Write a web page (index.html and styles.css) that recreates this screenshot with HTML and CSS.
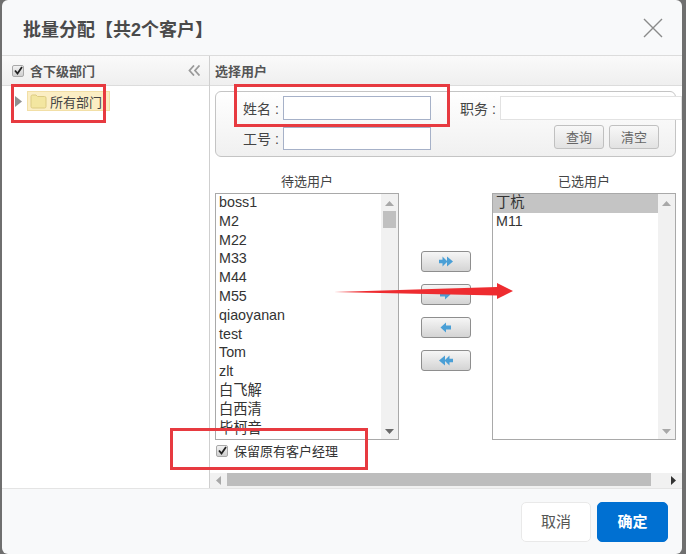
FILE: index.html
```html
<!DOCTYPE html>
<html lang="zh">
<head>
<meta charset="utf-8">
<title>批量分配</title>
<link rel="stylesheet" href="styles.css">
</head>
<body>
<div class="dialog">
  <header class="dlg-head">
    <h1 class="dlg-title">批量分配【共2个客户】</h1>
    <svg class="close" width="22" height="22" viewBox="0 0 22 22"><path d="M2 2 L20 20 M20 2 L2 20" stroke="#8a8a8a" stroke-width="1.4" fill="none"/></svg>
  </header>
  <div class="dlg-body">
    <aside class="left">
      <div class="bar left-bar">
        <span class="check"><svg width="9" height="9" viewBox="0 0 9 9"><path d="M1 4.5 L3.5 7.5 L8 1" stroke="#222" stroke-width="1.8" fill="none"/></svg></span>
        <span class="bar-text">含下级部门</span>
        <svg class="collapse" width="13" height="11" viewBox="0 0 13 11"><path d="M6 0.5 L1.5 5.5 L6 10.5 M11.5 0.5 L7 5.5 L11.5 10.5" stroke="#9a9a9a" stroke-width="1.8" fill="none"/></svg>
      </div>
      <div class="tree">
        <svg class="tree-arrow" width="7" height="11" viewBox="0 0 7 11"><path d="M0 0 L7 5.5 L0 11 Z" fill="#8f8f8f"/></svg>
        <div class="tree-node">
          <svg width="17" height="15" viewBox="0 0 17 15"><path d="M1 2.5 Q1 1 2.5 1 H6 L7.5 2.5 H14.5 Q16 2.5 16 4 V12.5 Q16 14 14.5 14 H2.5 Q1 14 1 12.5 Z" fill="#f3e6a0" stroke="#dccb82"/></svg>
          <span>所有部门</span>
        </div>
      </div>
    </aside>
    <section class="right">
      <div class="bar right-bar">选择用户</div>
      <div class="right-content">
        <div class="search">
          <div class="row row-one">
            <label class="lbl">姓名 :</label><span class="input inp-name"></span>
            <label class="lbl lbl-job">职务 :</label><span class="input inp-job"></span>
          </div>
          <div class="row row-two">
            <label class="lbl">工号 :</label><span class="input inp-name inp-no"></span>
            <div class="btns"><button class="btn-small">查询</button><button class="btn-small">清空</button></div>
          </div>
        </div>
        <div class="picker">
          <div class="col">
            <div class="col-title">待选用户</div>
            <div class="listbox">
              <ul class="items">
                <li>boss1</li><li>M2</li><li>M22</li><li>M33</li><li>M44</li><li>M55</li><li>qiaoyanan</li><li>test</li><li>Tom</li><li>zlt</li><li>白飞解</li><li>白西清</li><li>毕柯音</li>
              </ul>
              <div class="vscroll">
                <svg class="sb-arrow" width="9" height="5" viewBox="0 0 9 5"><path d="M4.5 0 L9 5 H0 Z" fill="#a8a8a8"/></svg>
                <div class="vthumb"></div>
                <svg class="sb-arrow sb-down" width="9" height="5" viewBox="0 0 9 5"><path d="M4.5 5 L9 0 H0 Z" fill="#6a6a6a"/></svg>
              </div>
            </div>
          </div>
          <div class="moves">
            <button class="mv"><svg width="14" height="11" viewBox="0 0 14 11"><path d="M0 3.8 H3.5 V0.5 L8.5 5.5 L3.5 10.5 V7.2 H0 Z M8 0.5 L14 5.5 L8 10.5 Z" fill="#4a9fd6"/></svg></button>
            <button class="mv"><svg width="11" height="11" viewBox="0 0 11 11"><path d="M0 3.5 H5 V0.5 L10.5 5.5 L5 10.5 V7.5 H0 Z" fill="#4a9fd6"/></svg></button>
            <button class="mv"><svg width="11" height="11" viewBox="0 0 11 11"><path d="M11 3.5 H6 V0.5 L0.5 5.5 L6 10.5 V7.5 H11 Z" fill="#4a9fd6"/></svg></button>
            <button class="mv"><svg width="14" height="11" viewBox="0 0 14 11"><path d="M14 3.8 H10.5 V0.5 L5.5 5.5 L10.5 10.5 V7.2 H14 Z M6 0.5 L0 5.5 L6 10.5 Z" fill="#4a9fd6"/></svg></button>
          </div>
          <div class="col">
            <div class="col-title">已选用户</div>
            <div class="listbox">
              <ul class="items">
                <li class="selected">丁杭</li><li>M11</li>
              </ul>
              <div class="vscroll">
                <svg class="sb-arrow" width="9" height="5" viewBox="0 0 9 5"><path d="M4.5 0 L9 5 H0 Z" fill="#a8a8a8"/></svg>
                <svg class="sb-arrow sb-down" width="9" height="5" viewBox="0 0 9 5"><path d="M4.5 5 L9 0 H0 Z" fill="#a8a8a8"/></svg>
              </div>
            </div>
          </div>
        </div>
        <div class="keep">
          <span class="check"><svg width="9" height="9" viewBox="0 0 9 9"><path d="M1 4.5 L3.5 7.5 L8 1" stroke="#222" stroke-width="1.8" fill="none"/></svg></span>
          <span>保留原有客户经理</span>
        </div>
      </div>
      <div class="hscroll">
        <div class="hs-btn"><svg width="5" height="9" viewBox="0 0 5 9"><path d="M0 4.5 L5 0 V9 Z" fill="#a8a8a8"/></svg></div>
        <div class="hthumb"></div>
        <div class="hs-rest"></div>
        <div class="hs-btn"><svg width="5" height="9" viewBox="0 0 5 9"><path d="M5 4.5 L0 0 V9 Z" fill="#333"/></svg></div>
      </div>
    </section>
  </div>
  <footer class="dlg-foot">
    <button class="btn btn-cancel">取消</button>
    <button class="btn btn-ok">确定</button>
  </footer>
</div>

<div class="mark mark-tree"></div>
<div class="mark mark-name"></div>
<div class="mark mark-keep"></div>
<svg class="mark-arrow" width="180" height="16" viewBox="0 0 180 16"><path d="M0 9 L163 4 L163 0 L179 8 L163 16 L163 12.5 Z" fill="#ee2c30"/></svg>
</body>
</html>
```

FILE: styles.css
```css
* { box-sizing: border-box; }
html, body { margin: 0; padding: 0; }
body {
  width: 686px;
  height: 554px;
  overflow: hidden;
  background: #6f6f6f;
  position: relative;
  font-family: "Liberation Sans", "Noto Sans CJK SC", sans-serif;
  color: #333;
}
ul { list-style: none; margin: 0; padding: 0; }
button { font-family: inherit; padding: 0; cursor: pointer; }

.dialog {
  margin-left: 2px;
  width: 680px;
  height: 554px;
  background: #f8f9fa;
  border-radius: 6px;
  display: flex;
  flex-direction: column;
  overflow: hidden;
}
.dlg-head {
  height: 56px;
  flex: none;
  display: flex;
  align-items: center;
  justify-content: space-between;
  padding: 0 18px 0 21px;
  border-bottom: 1px solid #dcdcdc;
}
.dlg-title {
  margin: 0;
  font-size: 18px;
  font-weight: 700;
  color: #4a4a4a;
}
.close { margin-top: 0; }

.dlg-body {
  height: 433px;
  flex: none;
  display: flex;
  background: #fff;
  border-bottom: 1px solid #e4e4e4;
}
.left {
  width: 208px;
  flex: none;
  border-right: 1px solid #cfcfcf;
}
.bar {
  height: 30px;
  background: linear-gradient(#fafafa, #efefef);
  border-bottom: 1px solid #dcdcdc;
  display: flex;
  align-items: center;
  font-size: 13px;
  font-weight: 700;
  color: #555;
}
.left-bar { padding: 0 8px 0 10px; }
.bar-text { margin-left: 6px; flex: 1; }
.check {
  width: 12px;
  height: 12px;
  flex: none;
  display: flex;
  align-items: center;
  justify-content: center;
  border: 1px solid #a9a9a9;
  border-radius: 2px;
  background: linear-gradient(#f2f2f2, #cfcfcf);
}
.tree {
  display: flex;
  align-items: center;
  padding: 5px 0 0 13px;
}
.tree-arrow { flex: none; }
.tree-node {
  margin-left: 5px;
  width: 83px;
  height: 20px;
  display: flex;
  align-items: center;
  gap: 3px;
  padding-left: 2px;
  background: #fbeec4;
  border: 1px solid #f2dfa6;
  font-size: 13px;
  white-space: nowrap;
  color: #444;
}

.right {
  flex: 1;
  min-width: 0;
  display: flex;
  flex-direction: column;
  overflow: hidden;
}
.right-bar { padding-left: 5px; flex: none; }
.right-content { flex: 1; min-height: 0; padding: 5px 0 0 5px; }

.search {
  width: 461px;
  height: 66px;
  border: 1px solid #c4c4c4;
  border-radius: 6px;
  background: linear-gradient(#fff, #f0f0f0);
  font-size: 14px;
}
.row { display: flex; align-items: center; padding-left: 27px; }
.row-one { padding-top: 4px; }
.row-two { margin-top: 6px; }
.lbl { width: 40px; flex: none; white-space: nowrap; color: #444; }
.lbl-job { margin-left: 29px; }
.input {
  display: block;
  flex: none;
  height: 24px;
  background: #fff;
  border: 1px solid #e2e2e2;
}
.inp-name { width: 148px; border-color: #a6b1c8; }
.inp-no { height: 23px; margin-top: 1px; }
.inp-job { width: 182px; }
.btns { margin-left: 123px; display: flex; gap: 5px; margin-top: -2px; }
.btn-small {
  width: 50px;
  height: 24px;
  border: 1px solid #c0c0c0;
  border-radius: 3px;
  background: linear-gradient(#f8f8f8, #e2e2e2);
  font-size: 13px;
  color: #666;
  padding-bottom: 2px;
}

.picker {
  display: flex;
  margin-top: 15px;
}
.col { width: 184px; flex: none; }
.col-title {
  height: 21px;
  font-size: 13px;
  line-height: 20px;
  text-align: center;
  color: #444;
}
.listbox {
  height: 247px;
  display: flex;
  border: 1px solid #a9a9a9;
  overflow: hidden;
}
.items {
  flex: 1;
  min-width: 0;
  font-size: 14.3px;
  color: #333;
  line-height: 17px;
}
.items li { padding-left: 3px; white-space: nowrap; height: 18.8px; }
.items li.selected { background: #c4c4c4; height: 19px; }
.vscroll {
  width: 17px;
  flex: none;
  background: #f1f1f1;
  display: flex;
  flex-direction: column;
  align-items: center;
  padding: 7px 0 5px;
  position: relative;
}
.vthumb {
  width: 13px;
  height: 17px;
  background: #c0c0c0;
  margin-top: 5px;
}
.sb-down { margin-top: auto; }
.moves {
  width: 93px;
  flex: none;
  display: flex;
  flex-direction: column;
  align-items: center;
  gap: 12px;
  padding-top: 79px;
}
.mv {
  width: 50px;
  height: 21px;
  flex: none;
  display: flex;
  align-items: center;
  justify-content: center;
  border: 1px solid #8e8e8e;
  border-radius: 3px;
  background: linear-gradient(#f6f6f6, #d4d4d4);
}
.keep {
  display: flex;
  align-items: center;
  gap: 6px;
  margin-top: 1px;
  padding-left: 1px;
  font-size: 13px;
  color: #333;
}

.hscroll {
  height: 15px;
  flex: none;
  display: flex;
  background: #f1f1f1;
}
.hs-btn {
  width: 17px;
  flex: none;
  display: flex;
  align-items: center;
  justify-content: center;
}
.hthumb { width: 424px; height: 13px; flex: none; background: #bdbdbd; }
.hs-rest { flex: 1; }

.dlg-foot {
  flex: 1;
  display: flex;
  justify-content: flex-end;
  align-items: flex-start;
  gap: 6px;
  padding: 13px 14px 0 0;
}
.btn {
  width: 71px;
  height: 40px;
  border-radius: 5px;
  font-size: 15px;
  padding-bottom: 3px;
}
.btn-cancel { width: 70px; background: #fff; border: 1px solid #e9e9e9; color: #555; }
.btn-ok { background: #0070d2; border: 1px solid #0070d2; color: #fff; font-weight: 700; }

.mark { position: absolute; border: 3px solid #e73a40; }
.mark-tree { left: 11px; top: 84px; width: 95px; height: 39px; }
.mark-name { left: 234px; top: 84px; width: 216px; height: 43px; }
.mark-keep { left: 170px; top: 428px; width: 198px; height: 42px; }
.mark-arrow { position: absolute; left: 334px; top: 283px; }
```
